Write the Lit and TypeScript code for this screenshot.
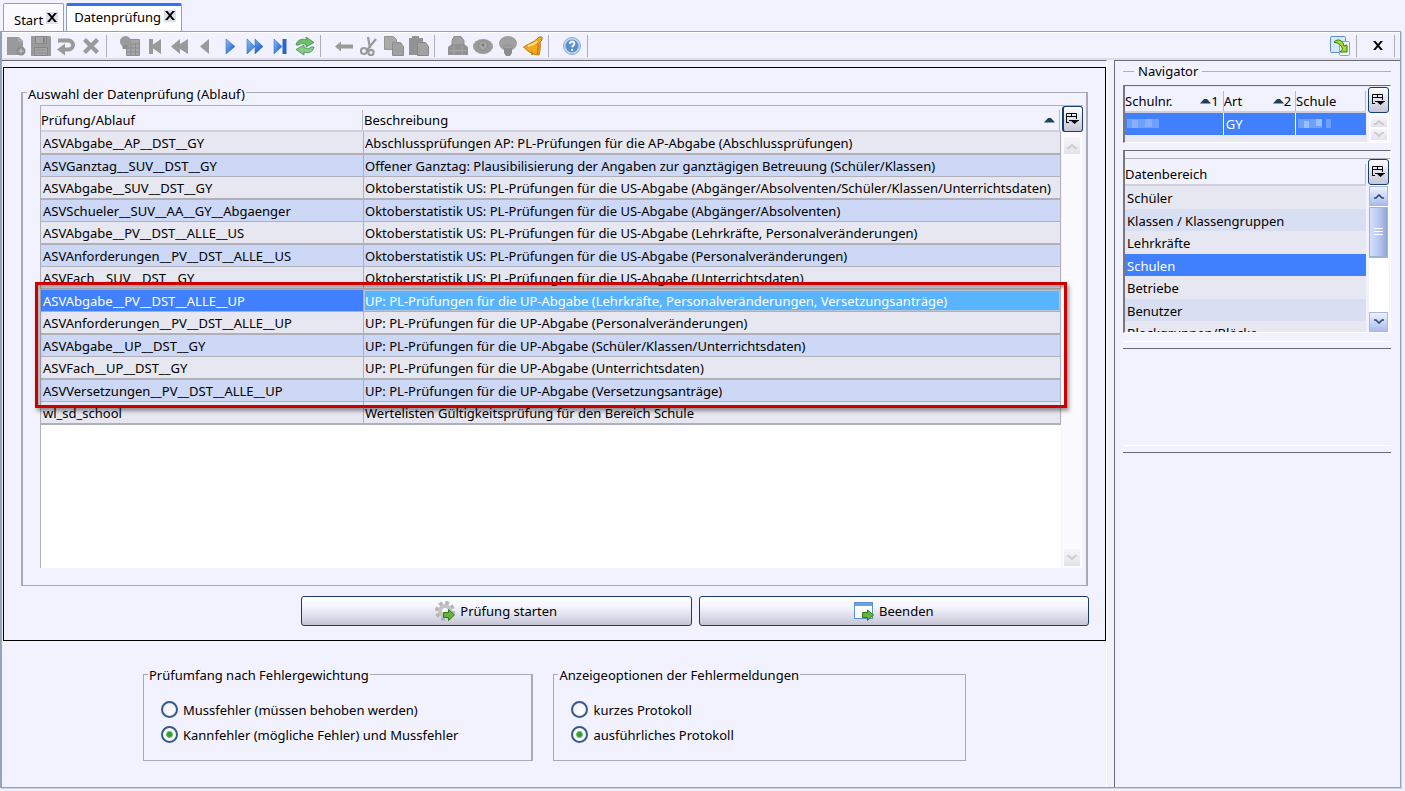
import { LitElement, html, css, svg, nothing } from "lit";
import { customElement, state } from "lit/decorators.js";
import { classMap } from "lit/directives/class-map.js";

type Check = { name: string; text: string };

const CHECKS: Check[] = [
  { name: "ASVAbgabe__AP__DST__GY", text: "Abschlussprüfungen AP: PL-Prüfungen für die AP-Abgabe (Abschlussprüfungen)" },
  { name: "ASVGanztag__SUV__DST__GY", text: "Offener Ganztag: Plausibilisierung der Angaben zur ganztägigen Betreuung (Schüler/Klassen)" },
  { name: "ASVAbgabe__SUV__DST__GY", text: "Oktoberstatistik US: PL-Prüfungen für die US-Abgabe (Abgänger/Absolventen/Schüler/Klassen/Unterrichtsdaten)" },
  { name: "ASVSchueler__SUV__AA__GY__Abgaenger", text: "Oktoberstatistik US: PL-Prüfungen für die US-Abgabe (Abgänger/Absolventen)" },
  { name: "ASVAbgabe__PV__DST__ALLE__US", text: "Oktoberstatistik US: PL-Prüfungen für die US-Abgabe (Lehrkräfte, Personalveränderungen)" },
  { name: "ASVAnforderungen__PV__DST__ALLE__US", text: "Oktoberstatistik US: PL-Prüfungen für die US-Abgabe (Personalveränderungen)" },
  { name: "ASVFach__SUV__DST__GY", text: "Oktoberstatistik US: PL-Prüfungen für die US-Abgabe (Unterrichtsdaten)" },
  { name: "ASVAbgabe__PV__DST__ALLE__UP", text: "UP: PL-Prüfungen für die UP-Abgabe (Lehrkräfte, Personalveränderungen, Versetzungsanträge)" },
  { name: "ASVAnforderungen__PV__DST__ALLE__UP", text: "UP: PL-Prüfungen für die UP-Abgabe (Personalveränderungen)" },
  { name: "ASVAbgabe__UP__DST__GY", text: "UP: PL-Prüfungen für die UP-Abgabe (Schüler/Klassen/Unterrichtsdaten)" },
  { name: "ASVFach__UP__DST__GY", text: "UP: PL-Prüfungen für die UP-Abgabe (Unterrichtsdaten)" },
  { name: "ASVVersetzungen__PV__DST__ALLE__UP", text: "UP: PL-Prüfungen für die UP-Abgabe (Versetzungsanträge)" },
  { name: "wl_sd_school", text: "Wertelisten Gültigkeitsprüfung für den Bereich Schule" },
];

const AREAS = ["Schüler", "Klassen / Klassengruppen", "Lehrkräfte", "Schulen", "Betriebe", "Benutzer", "Blockgruppen/Blöcke"];

const G = "#9a9a9a";

const ICONS = {
  neu: svg`<path d="M1 1h12l4 4v14H1z" fill=${G}/><path d="M13 1v4h4" fill="none" stroke="#b8b8b8"/><circle cx="15" cy="15" r="4.5" fill="#8e8e8e"/><path d="M15 12.500v5M12.500 15h5" stroke="#bdbdbd" stroke-width="1.500"/>`,
  save: svg`<path d="M0 0h19l1 1v19H0z" fill=${G}/><path d="M4.500 .5h11v7h-11zM3.500 11.500h13v8h-13z" fill="#a6a6a6" stroke="#868686"/><path d="M12 1.500h2v5h-2z" fill="#808080"/><path d="M5 14h10M5 17h10" stroke="#8a8a8a"/>`,
  undo: svg`<path d="M2 4.500h10.500a4.500 4.500 0 0 1 0 9H7" fill="none" stroke=${G} stroke-width="4"/><path d="M9 7.500v12l-8-6z" fill=${G}/>`,
  del: svg`<path d="M2 5l3-3 5 5 5-5 3 3-5 5 5 5-3 3-5-5-5 5-3-3 5-5z" fill=${G}/>`,
  list: svg`<path d="M6.500 3.500h13v16h-13z" fill="#a6a6a6" stroke="#909090"/><path d="M6 8h14M6 12h14M6 16h14M11 7v12M15.500 7v12" stroke="#8c8c8c"/><circle cx="5.500" cy="5.500" r="5.500" fill=${G}/><path d="M2.500 9h6v4h-6z" fill="#8e8e8e"/>`,
  first: svg`<path d="M4 3h4v5.500L16 3v15l-8-5.500V18H4z" fill=${G}/>`,
  rew: svg`<path d="M10 3v5l8-5v15l-8-5v5L1 10.500z" fill=${G}/>`,
  prev: svg`<path d="M14 3v15l-9-7.500z" fill=${G}/>`,
  next: svg`<path d="M6 3v15l9-7.500z" fill="url(#bl)" stroke="#2f6fd0" stroke-width=".6"/>`,
  fwd: svg`<path d="M2 3v15l8-7.500zM10 3v15l8-7.500z" fill="url(#bl)" stroke="#2f6fd0" stroke-width=".6"/>`,
  last: svg`<path d="M4 3v15l8-7.500z" fill="url(#bl)" stroke="#2f6fd0" stroke-width=".6"/><path d="M12.500 3h4v15h-4z" fill="#2767cc"/>`,
  refresh: svg`<path d="M1 9c1-5 6-7 10-5V1l8 5.500L11 11V8.500c-3-1.500-6-1-7 .5z" fill="#6cbf6c" stroke="#3c8f42" stroke-width=".8"/><path d="M19 11c-1 5-6 7-10 5v3l-8-5.500L9 9v2.500c3 1.500 6 1 7-.5z" fill="#8bcb88" stroke="#3c8f42" stroke-width=".8"/>`,
  back: svg`<path d="M1 10.500L7 5.500v3h12v4H7v3z" fill=${G}/>`,
  cut: svg`<path d="M9 1l2 11M17 3L8 14" stroke=${G} stroke-width="2.200"/><circle cx="5" cy="15" r="3" fill="none" stroke=${G} stroke-width="2.200"/><circle cx="12" cy="16.500" r="2.600" fill="none" stroke=${G} stroke-width="2.200"/>`,
  copy: svg`<path d="M.5 .5h9l3 3v10H.5z" fill="#aaa" stroke="#949494"/><path d="M8.500 6.500h8l3 4v9h-11z" fill="#a0a0a0" stroke="#8c8c8c"/>`,
  paste: svg`<path d="M0 2h3V0h7v2h4v17H0z" fill="#939393"/><path d="M8.500 6.500h8l3 4v9h-11z" fill="#a2a2a2" stroke="#888"/>`,
  print: svg`<path d="M6 .5h7l3 4v6H4v-6z" fill="#a2a2a2" stroke="#909090"/><path d="M0 11l4-3h12l4 3v8H0z" fill="#929292"/><path d="M1 14.500h18M6 10v9M14 10v9" stroke="#a8a8a8"/>`,
  eye: svg`<ellipse cx="10" cy="10.500" rx="10" ry="7.500" fill=${G}/><circle cx="10" cy="9.500" r="4.500" fill="#a6a6a6" stroke="#8a8a8a"/><circle cx="10" cy="9" r="1.400" fill="#777"/>`,
  bulb: svg`<ellipse cx="10" cy="7.500" rx="9" ry="7.500" fill="#a0a0a0"/><path d="M6 12h8v5l-2 3H8l-2-3z" fill="#8c8c8c"/><path d="M5 11c2-2 8-2 10 0" fill="none" stroke="#8c8c8c"/>`,
  bell: svg`<path d="M14 3l2-2h3v3l-2 2c1 4 0 9-1 13-5 0-11-3-15.500-8C5 8 11 6 14 3z" fill="#f0a91c" stroke="#b87008" stroke-width=".9"/><path d="M5 10c4-1 7-2.500 9.500-4.500" stroke="#ffe07a" stroke-width="2" fill="none"/><path d="M15 7c.6 4 0 8-1 11" stroke="#b36b08" fill="none"/><path d="M8 15l3 2-1 2H8z" fill="#d08a10"/>`,
  help: svg`<circle cx="10" cy="10" r="8.500" fill="#c4daf0" stroke="#86a9d2"/><circle cx="10" cy="10" r="6.500" fill="#5b8fca"/><path d="M7.800 8c0-3.200 4.600-3.200 4.600-.3 0 1.700-2.300 1.800-2.300 3.600M10.100 13v1.800" stroke="#fff" stroke-width="1.900" fill="none"/>`,
  sync: svg`<rect x=".5" y=".5" width="15" height="16" rx="1" fill="#d6e8fa" stroke="#5b8fc4"/><rect x="9.500" y="5.500" width="10" height="14" rx="1" fill="#eef5fd" stroke="#7ea8d4"/><path d="M4 6c4-4 9-2 10 4l3-1v7h-7l2.500-3c-1-4-4-6-8.500-7z" fill="#a4dc2c" stroke="#2e7d1c"/>`,
  start: svg`<circle cx="10" cy="10" r="7" fill="none" stroke="#b4b4b4" stroke-width="6" stroke-dasharray="3.200 2.300"/><circle cx="10" cy="10" r="5" fill="#fafafa" stroke="#c4c4c4" stroke-width="4"/><path d="M8.500 11.500h5v-3l6 5.500-6 5.500v-3h-5z" fill="#66b23c" stroke="#2e7d14"/>`,
  exit: svg`<rect x=".5" y="1.500" width="18" height="16" fill="#fbfdff" stroke="#5c92d0"/><path d="M1 2h17v3H1z" fill="#6fa3de"/><path d="M8.500 11.500h5v-2.500l6 5-6 5.500v-3h-5z" fill="#66b23c" stroke="#2e7d14"/>`,
};

const glyph = (name: keyof typeof ICONS) => html`<svg class="icon" viewBox="0 0 20 20" width="20" height="20" aria-hidden="true">
  <defs><linearGradient id="bl" x1="0" y1="0" x2="1" y2="1"><stop offset="0" stop-color="#8fbff5"/><stop offset="1" stop-color="#0f4fc0"/></linearGradient></defs>
  ${ICONS[name]}</svg>`;

const columnIcon = html`<svg width="13" height="12" viewBox="0 0 13 12" aria-hidden="true">
  <path d="M.5 10V.5h10V6M0 3.500h11M5.500 0v4M0 9.500h3M3 7.500h10" fill="none" stroke="#000"/><path d="M5 8h7l-3.500 3z"/></svg>`;

const cross = html`<svg width="12" height="12" viewBox="0 0 12 12" aria-hidden="true">
  <path d="M1 1h2.500L6 4l2.500-3H11L7.200 5.500 11 10H8.500L6 7l-2.500 3H1l3.800-4.500z"/></svg>`;

const chevron = (down: boolean) => html`<svg width="12" height="8" viewBox="0 0 12 8" aria-hidden="true">
  <path d=${down ? "M1 2h2l3 3 3-3h2M4.500 4.500h3" : "M1 6h2l3-3 3 3h2M4.500 3.500h3"} fill="none" stroke="currentColor" stroke-width="1.500"/></svg>`;

const sortMark = html`<svg class="sort" width="11" height="6" viewBox="0 0 11 6" aria-hidden="true"><path d="M0 5.500L4 1h3l4 4.500z" fill="#20405c"/></svg>`;

@customElement("app-root")
export class AppRoot extends LitElement {
  @state() private selected = 7;
  @state() private area = 3;

  static styles = css`
    :host {
      display: flex;
      flex-direction: column;
      box-sizing: border-box;
      height: 100vh;
      padding: 3px 4px 3px 0;
      background: #f2f2ff;
      color: #000;
      font: 13px/20px "Noto Sans", "Open Sans", sans-serif;
    }
    * { box-sizing: border-box; }
    button, input { font: inherit; color: inherit; margin: 0; padding: 0; }
    svg { display: block; flex: none; }

    .tabs { display: flex; align-items: flex-end; gap: 2px; height: 28px; padding-left: 3px; flex: none; }
    .tab {
      display: flex; align-items: flex-start; gap: 3px; height: 28px; padding: 0 5px 0 10px;
      border: 1px solid #8ea2bd; border-bottom: 0; border-radius: 2px 2px 0 0;
      background: #fafaff;
    }
    .tab .name { border: 0; background: none; line-height: 20px; padding-top: 6px; }
    .tab .shut { border: 0; background: #dedeec; width: 12px; height: 12px; margin-top: 8px; }
    .tab.active { background: #fff; border-top: 3px solid #3375e8; padding-left: 7px; }
    .tab.active .name { padding-top: 1px; }
    .tab.active .shut { margin-top: 4px; }

    .window {
      flex: 1; min-height: 0; display: flex; flex-direction: column;
      border: 1px solid #8ea2bd; border-left: 2px solid #93a3b8;
      box-shadow: 1px 1px 0 #ccd4e4;
    }
    .toolbar { display: flex; align-items: center; height: 28px; padding-left: 1px; flex: none; border-top: 1px solid #fff; border-bottom: 2px solid #dcdcea; }
    .tool { display: grid; place-items: center; width: 25px; height: 24px; border: 0; background: none; }
    .sep { width: 1px; height: 22px; background: #aeaeb8; margin: 0 10px 0 3px; }
    .grow { flex: 1; }
    .toolbar .tail { margin: 0 8px 0 4px; }
    .toolbar .tail:last-child { margin-right: 5px; }

    .body { flex: 1; min-height: 0; display: grid; grid-template-columns: minmax(0, 1fr) 286px; gap: 7px; }
    .main { display: flex; flex-direction: column; min-height: 0; border-top: 1px solid #6a6a70; border-right: 1px solid #fff; padding: 6px 0 26px 1px; }
    .panel { flex: 1; min-height: 0; display: flex; flex-direction: column; border: 1px solid #000; padding: 13px 16px 14px 17px; }

    fieldset { margin: 0; min-width: 0; border: 1px solid #a9a9b4; }
    legend { padding: 2px 1px 0; line-height: 20px; }
    .choice { flex: 1; min-height: 0; display: flex; border-width: 1px 2px 1px 2px; padding: 0 3px 17px 0; margin-right: 1px; }
    .choice legend { margin-left: 4px; padding-top: 3px; }
    .sheet { position: relative; flex: 1; display: grid; grid-template-columns: minmax(0, 1fr) 22px; min-height: 0; border: 1px solid #b0b0b8; border-width: 1px 0 0 1px; background: #fff; margin: 1px 0 0 17px; }
    .sheet table { align-self: start; }

    table { width: 100%; border-collapse: separate; border-spacing: 0; table-layout: fixed; align-self: start; }
    th, td { text-align: left; font-weight: 400; white-space: nowrap; overflow: hidden; padding: 0; }
    th { height: 26px; background: #f2f2ff; border-bottom: 2px solid #cfcfdb; padding: 3px 1px 0 0; line-height: 20px; }
    .head { display: flex; align-items: center; justify-content: space-between; height: 20px; border-right: 1px solid #b9b9c4; padding-right: 4px; }
    .head .order { display: flex; align-items: center; }
    .colname { width: 323px; }
    .checks td { height: 22px; border: 1px solid #b0b0b8; border-width: 0 1px 1px 0; background: #ccd8f6; padding-left: 2px; line-height: 20px; }
    .checks tr:nth-child(odd) td { height: 23px; padding-top: 1px; border-bottom-width: 2px; background: #e7e7f1; }
    .checks td + td { padding-left: 1px; }
    .checks tr.on td { background: #4080ff; color: #fff; }
    .checks tr.on td + td { background: #59b4ff; box-shadow: inset 0 0 0 1px #b8c4d4; }

    .rail { display: flex; flex-direction: column; align-items: center; background: #f2f2ff; min-height: 0; }
    .cols {
      display: grid; place-items: center; width: 21px; height: 26px; flex: none;
      border: 1px solid #163c70; border-radius: 3px; background: linear-gradient(#fff, #dcdcea 60%, #c6c6d6);
    }
    .cols.wide { border-left-width: 2px; }
    .bar { flex: 1; width: 20px; display: flex; flex-direction: column; justify-content: space-between; align-items: center; background: #fbfbff; padding: 5px 0 2px; }
    .step { display: grid; place-items: center; flex: none; width: 16px; height: 17px; border: 0; background: linear-gradient(#f6f6fa, #e2e2e8); color: #c4c4cc; }

    .mark {
      position: absolute; left: -6px; right: 16px; top: 176px; height: 126px;
      border: 3px solid #cc0000; pointer-events: none;
      box-shadow: 2px 3px 4px rgba(0, 0, 0, .4), inset 2px 3px 3px rgba(0, 0, 0, .3);
    }

    .actions { display: grid; grid-template-columns: 1fr 1fr; gap: 7px; margin: 10px 0 0 280px; }
    .action {
      display: flex; align-items: center; justify-content: center; gap: 5px; height: 30px;
      border: 1px solid #163c70; border-radius: 3px;
      background: linear-gradient(#fff, #f4f4fb 35%, #dcdcea 70%, #c4c4d4);
    }
    .options { display: grid; grid-template-columns: 390fr 412fr; gap: 20px; margin: 22px 140px 0; flex: none; }
    .options fieldset { height: 98px; padding: 12px 0; }
    .options fieldset:first-child { border-width: 1px 2px 1px 1px; }
    .options legend { margin-left: 4px; }
    .opt { display: flex; align-items: center; gap: 5px; height: 25px; padding-left: 17px; }
    .opt input {
      appearance: none; width: 17px; height: 17px; border-radius: 50%;
      border: 2px solid #345a8c; background: radial-gradient(circle at 60% 60%, #fff, #e8e8ee);
    }
    .opt input:checked { background: radial-gradient(circle, #2f9e2f 0 2px, #6cc06c 3px, #fff 4px); }

    .side { border-top: 1px solid #6a6a70; border-left: 1px solid #6a6a70; padding: 0 9px 0 8px; min-width: 0; }
    .title { display: flex; align-items: center; gap: 4px; height: 20px; margin: 0; font: inherit; }
    .title::before, .title::after { content: ""; height: 1px; background: #b0b0b8; width: 11px; }
    .title::after { flex: 1; }
    .frame { display: grid; grid-template-columns: minmax(0, 1fr) 23px; grid-template-rows: minmax(0, 1fr); border: 1px solid #fff; border-top: 1px solid #6a6a70; border-left: 2px solid #77777f; overflow: hidden; background: #e7e7f1; }
    .frame.schools { height: 58px; margin-top: 4px; padding-top: 1px; }
    .frame.areas { height: 183px; margin-top: 7px; padding-top: 8px; background: linear-gradient(#f2f2ff 7px, #b0b0b8 7px 8px, #e7e7f1 8px); }
    .frame table { border-right: 1px solid #f2f2ff; }
    .frame th { height: 27px; padding: 4px 0 0; }
    .frame.schools th { height: 26px; padding-top: 3px; }
    .schools td { height: 22px; background: #4080ff; color: #fff; border-right: 1px solid #fff; padding-left: 2px; }
    .schools td:last-child { border: 0; }
    .areas td { height: 23px; background: #e7e7f1; padding: 0 0 0 2px; }
    .areas tr:nth-child(even) td { height: 22px; padding-top: 1px; background: #d9dff3; }
    .areas tr.on:nth-child(n) td { background: #4080ff; color: #fff; }
    .areas .bar { background: #fff; padding: 1px 0 0; justify-content: flex-start; }
    .areas .step { width: 19px; height: 20px; border: 1px solid #a8b8e0; background: linear-gradient(#eef3ff, #a9bcec); color: #2c4470; }
    .areas .thumb { flex: none; width: 19px; height: 51px; margin: 1px 0; border: 1px solid #9fb2dc; border-bottom-width: 2px; background: linear-gradient(90deg, #d4dffa, #b9c9f0 50%, #93a6d4); display: grid; place-items: center; }
    .areas .gap { flex: 1; }
    .bar.tiny { padding: 3px 0 0; justify-content: flex-start; gap: 2px; }
    .tiny .step { height: 11px; }
    .rule { height: 8px; margin-top: 8px; border: 1px solid #fff; border-width: 1px 0 0; border-bottom: 1px solid #6a6a70; }
    .rule.low { margin-top: 96px; }
  `;

  private tool(name: keyof typeof ICONS, label: string) {
    return html`<button class="tool" type="button" aria-label=${label}>${glyph(name)}</button>`;
  }

  private columnButton(wide = false) {
    return html`<button class="cols ${wide ? "wide" : ""}" type="button" aria-label="Spalten wählen">${columnIcon}</button>`;
  }

  private step(down: boolean) {
    return html`<button class="step" type="button" aria-label=${down ? "Nach unten" : "Nach oben"}>${chevron(down)}</button>`;
  }

  private radio(group: string, id: string, text: string, checked: boolean) {
    return html`<div class="opt"><input type="radio" id=${id} name=${group} ?checked=${checked}><label for=${id}>${text}</label></div>`;
  }

  render() {
    return html`
      <nav class="tabs">
        <div class="tab"><button class="name" type="button">Start</button><button class="shut" type="button" aria-label="Schließen">${cross}</button></div>
        <div class="tab active"><button class="name" type="button">Datenprüfung</button><button class="shut" type="button" aria-label="Schließen">${cross}</button></div>
      </nav>
      <div class="window">
        <div class="toolbar">
          ${this.tool("neu", "Neu")}${this.tool("save", "Speichern")}${this.tool("undo", "Rückgängig")}${this.tool("del", "Löschen")}
          <span class="sep"></span>
          ${this.tool("list", "Liste")}${this.tool("first", "Erster")}${this.tool("rew", "Zurückspulen")}${this.tool("prev", "Voriger")}${this.tool("next", "Nächster")}${this.tool("fwd", "Vorspulen")}${this.tool("last", "Letzter")}${this.tool("refresh", "Aktualisieren")}
          <span class="sep"></span>
          ${this.tool("back", "Zurück")}${this.tool("cut", "Ausschneiden")}${this.tool("copy", "Kopieren")}${this.tool("paste", "Einfügen")}
          <span class="sep"></span>
          ${this.tool("print", "Drucken")}${this.tool("eye", "Vorschau")}${this.tool("bulb", "Hinweis")}${this.tool("bell", "Benachrichtigung")}
          <span class="sep"></span>
          ${this.tool("help", "Hilfe")}
          <span class="sep"></span>
          <span class="grow"></span>
          ${this.tool("sync", "Synchronisieren")}
          <span class="sep tail"></span>
          <button class="tool" type="button" aria-label="Fenster schließen">${cross}</button>
          <span class="sep tail"></span>
        </div>
        <div class="body">
          <main class="main">
            <section class="panel">
              <fieldset class="choice">
                <legend>Auswahl der Datenprüfung (Ablauf)</legend>
                <div class="sheet">
                  <table class="checks">
                    <colgroup><col class="colname"><col></colgroup>
                    <thead><tr><th><div class="head">Prüfung/Ablauf</div></th><th><div class="head">Beschreibung${sortMark}</div></th></tr></thead>
                    <tbody>
                      ${CHECKS.map((c, i) => html`<tr class=${classMap({ on: i === this.selected })} @click=${() => (this.selected = i)}><td>${c.name}</td><td>${c.text}</td></tr>`)}
                    </tbody>
                  </table>
                  <div class="rail">${this.columnButton(true)}<div class="bar">${this.step(false)}${this.step(true)}</div></div>
                  <div class="mark"></div>
                </div>
              </fieldset>
              <div class="actions">
                <button class="action" type="button">${glyph("start")}Prüfung starten</button>
                <button class="action" type="button">${glyph("exit")}Beenden</button>
              </div>
            </section>
            <div class="options">
              <fieldset>
                <legend>Prüfumfang nach Fehlergewichtung</legend>
                ${this.radio("umfang", "muss", "Mussfehler (müssen behoben werden)", false)}
                ${this.radio("umfang", "kann", "Kannfehler (mögliche Fehler) und Mussfehler", true)}
              </fieldset>
              <fieldset>
                <legend>Anzeigeoptionen der Fehlermeldungen</legend>
                ${this.radio("anzeige", "kurz", "kurzes Protokoll", false)}
                ${this.radio("anzeige", "lang", "ausführliches Protokoll", true)}
              </fieldset>
            </div>
          </main>
          <aside class="side">
            <h2 class="title">Navigator</h2>
            <div class="frame schools">
              <table>
                <colgroup><col style="width:41%"><col style="width:30%"><col></colgroup>
                <thead><tr>
                  <th><div class="head">Schulnr.<span class="order">${sortMark}1</span></div></th>
                  <th><div class="head">Art<span class="order">${sortMark}2</span></div></th>
                  <th><div class="head">Schule</div></th>
                </tr></thead>
                <tbody><tr>
                  <td><svg width="32" height="12" aria-hidden="true"><path d="M0 1h32v9H0z" fill="#6f9fff"/><path d="M5 2h6v8H5zM18 1h7v8h-7z" fill="#86afff"/></svg></td>
                  <td>GY</td>
                  <td><svg width="34" height="12" aria-hidden="true"><path d="M0 1h24v9H0zM28 1h5v9h-5z" fill="#6f9fff"/><path d="M6 3h5v7H6zM18 1h6v7h-6z" fill="#9cc0ff"/></svg></td>
                </tr></tbody>
              </table>
              <div class="rail">${this.columnButton()}<div class="bar tiny">${this.step(false)}${this.step(true)}</div></div>
            </div>
            <div class="frame areas">
              <table>
                <thead><tr><th><div class="head">Datenbereich</div></th></tr></thead>
                <tbody>${AREAS.map((a, i) => html`<tr class=${i === this.area ? "on" : nothing} @click=${() => (this.area = i)}><td>${a}</td></tr>`)}</tbody>
              </table>
              <div class="rail">${this.columnButton()}<div class="bar">${this.step(false)}<div class="thumb"><svg width="10" height="10" aria-hidden="true"><path d="M0 1.500h9M0 4.500h9M0 7.500h9" stroke="#fff"/></svg></div><span class="gap"></span>${this.step(true)}</div></div>
            </div>
            <div class="rule"></div>
            <div class="rule low"></div>
          </aside>
        </div>
      </div>
    `;
  }
}
